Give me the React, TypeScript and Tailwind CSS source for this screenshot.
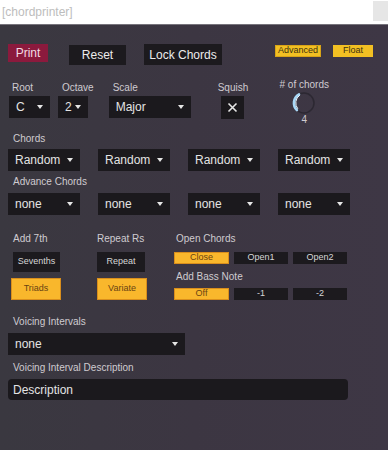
import React from "react";

const font = { fontFamily: '"Liberation Sans", Arial, sans-serif' };

function Caret() {
  return (
    <span className="inline-block w-0 h-0 border-x-[3.5px] border-x-transparent border-t-[4px] border-t-[#e6e6e6]" />
  );
}

function Dropdown({ text, className }: { text: string; className: string }) {
  return (
    <div
      className={`flex items-center justify-between bg-[#1b191d] pl-[7px] pr-[7px] text-[12px] text-[#e4e4e4] ${className}`}
    >
      <span>{text}</span>
      <Caret />
    </div>
  );
}

function Label({ children, className = "" }: { children: React.ReactNode; className?: string }) {
  return (
    <div className={`text-[10px] leading-[12px] text-[#cfcbd0] ${className}`}>{children}</div>
  );
}

function Toggle({
  text,
  on,
  className,
}: {
  text: string;
  on?: boolean;
  className: string;
}) {
  return (
    <div
      className={`flex items-center justify-center text-[9px] ${
        on
          ? "bg-[#f9b72c] border border-[#d98e1c] text-[#6a4412]"
          : "bg-[#1c1a1e] text-[#d6d6d6]"
      } ${className}`}
    >
      {text}
    </div>
  );
}

function Knob() {
  return (
    <svg width="26" height="24" viewBox="0 0 26 24">
      <circle cx="13" cy="12" r="10" fill="none" stroke="#2c2832" strokeWidth="1.5" />
      <path
        d="M 5.9 19.1 A 10 10 0 0 1 8 3.3"
        fill="none"
        stroke="#a9d8f7"
        strokeWidth="2.6"
        strokeLinecap="round"
      />
      <path
        d="M 6.6 17.5 A 9 9 0 0 1 8.5 4.4"
        fill="none"
        stroke="#eef8ff"
        strokeWidth="1"
        strokeLinecap="round"
      />
    </svg>
  );
}

export default function App() {
  const chords = ["Random", "Random", "Random", "Random"];
  const advance = ["none", "none", "none", "none"];

  return (
    <div className="w-[388px] h-[450px] overflow-hidden flex flex-col" style={font}>
      {/* window title */}
      <div className="h-[25px] shrink-0 bg-white border-b border-[#77747c] flex items-center justify-between pl-[2px]">
        <span className="text-[12px] text-[#bdbdbd]">[chordprinter]</span>
        <div className="w-[15px] h-[20px] bg-[#e6e6e6] mt-[-2px]" />
      </div>

      <div className="flex-1 bg-gradient-to-r from-[#3a3840] via-[#3c3642] to-[#3e3745] pl-[8px] pt-[19px]">
        {/* top buttons */}
        <div className="flex items-start h-[22px] pr-[15px]">
          <div className="w-[40px] h-[18px] bg-[#8b1a3d] text-[#f2dbe3] text-[12px] flex items-center justify-center">
            Print
          </div>
          <div className="ml-[21px] mt-[1px] w-[57px] h-[20px] bg-[#1c1a1e] text-[#ececec] text-[12px] flex items-center justify-center">
            Reset
          </div>
          <div className="ml-[18px] w-[78px] h-[21px] bg-[#1c1a1e] text-[#ececec] text-[12px] flex items-center justify-center">
            Lock Chords
          </div>
          <div className="ml-auto mt-[1px] w-[46px] h-[12px] bg-[#f2c023] border border-[#d9a417] text-[9px] text-[#3d3210] flex items-center justify-center">
            Advanced
          </div>
          <div className="ml-[12px] mt-[1px] w-[40px] h-[12px] bg-[#f2c023] text-[9px] text-[#3d3210] flex items-center justify-center">
            Float
          </div>
        </div>

        {/* root / octave / scale / squish / knob */}
        <div className="flex items-start h-[37px] mt-[16px]">
          <div className="ml-[1px] flex flex-col gap-[2px]">
            <Label className="ml-[3px]">Root</Label>
            <Dropdown text="C" className="w-[41px] h-[22px]" />
          </div>
          <div className="ml-[8px] flex flex-col gap-[2px]">
            <Label className="ml-[4px]">Octave</Label>
            <Dropdown text="2" className="w-[30px] h-[22px] pl-[5px]" />
          </div>
          <div className="ml-[15px] flex flex-col gap-[2px]">
            <Label className="ml-[4px]">Scale</Label>
            <Dropdown text="Major" className="w-[82px] h-[22px]" />
          </div>
          <div className="ml-[27px] flex flex-col items-center gap-[2px]">
            <Label>Squish</Label>
            <div className="w-[23px] h-[23px] bg-[#1b191d] flex items-center justify-center">
              <svg width="11" height="11" viewBox="0 0 11 11">
                <path d="M1.5 1.5 L9.5 9.5 M9.5 1.5 L1.5 9.5" stroke="#e8e8e8" strokeWidth="1.6" />
              </svg>
            </div>
          </div>
          <div className="ml-[31px] -mt-[3px] w-[50px] flex flex-col items-center">
            <Label>
              # of chords
            </Label>
            <Knob />
            <div className="text-[10px] leading-[10px] text-[#cfcbd0]">4</div>
          </div>
        </div>

        {/* chords */}
        <Label className="mt-[14px] ml-[5px]">Chords</Label>
        <div className="flex gap-[18px] mt-[4px]">
          {chords.map((c, i) => (
            <Dropdown key={i} text={c} className="w-[72px] h-[22px]" />
          ))}
        </div>
        <Label className="mt-[5px] ml-[5px]">Advance Chords</Label>
        <div className="flex gap-[18px] mt-[5px]">
          {advance.map((c, i) => (
            <Dropdown key={i} text={c} className="w-[72px] h-[22px]" />
          ))}
        </div>

        {/* toggles */}
        <div className="flex items-start mt-[18px]">
          <div className="ml-[3px] w-[50px] flex flex-col">
            <Label className="ml-[2px]">Add 7th</Label>
            <Toggle text="Sevenths" className="mt-[7px] ml-[2px] w-[47px] h-[20px]" />
            <Toggle text="Triads" on className="mt-[6px] w-[50px] h-[22px]" />
          </div>
          <div className="ml-[36px] w-[50px] flex flex-col">
            <Label>Repeat Rs</Label>
            <Toggle text="Repeat" className="mt-[7px] w-[48px] h-[20px]" />
            <Toggle text="Variate" on className="mt-[6px] w-[50px] h-[22px]" />
          </div>
          <div className="ml-[27px] flex flex-col">
            <Label className="ml-[2px]">Open Chords</Label>
            <div className="flex gap-[5px] mt-[7px]">
              <Toggle text="Close" on className="w-[55px] h-[12px]" />
              <Toggle text="Open1" className="w-[54px] h-[12px]" />
              <Toggle text="Open2" className="w-[54px] h-[12px]" />
            </div>
            <Label className="mt-[7px] ml-[2px]">Add Bass Note</Label>
            <div className="flex gap-[5px] mt-[5px]">
              <Toggle text="Off" on className="w-[55px] h-[12px]" />
              <Toggle text="-1" className="w-[54px] h-[12px]" />
              <Toggle text="-2" className="w-[54px] h-[12px]" />
            </div>
          </div>
        </div>

        {/* voicing */}
        <Label className="mt-[16px] ml-[5px]">Voicing Intervals</Label>
        <Dropdown text="none" className="mt-[5px] w-[177px] h-[22px]" />
        <Label className="mt-[7px] ml-[5px]">Voicing Interval Description</Label>
        <div className="mt-[5px] w-[340px] h-[21px] rounded-[4px] bg-[#1b191d] flex items-center pl-[5px] text-[12px] text-[#e4e4e4]">
          Description
        </div>
      </div>
    </div>
  );
}
